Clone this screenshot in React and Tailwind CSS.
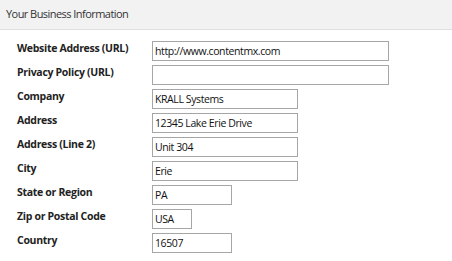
import React from "react";

const fields = [
  { label: "Website Address (URL)", value: "http://www.contentmx.com", width: "w-[237px]" },
  { label: "Privacy Policy (URL)", value: "", width: "w-[237px]" },
  { label: "Company", value: "KRALL Systems", width: "w-[146px]" },
  { label: "Address", value: "12345 Lake Erie Drive", width: "w-[146px]" },
  { label: "Address (Line 2)", value: "Unit 304", width: "w-[146px]" },
  { label: "City", value: "Erie", width: "w-[146px]" },
  { label: "State or Region", value: "PA", width: "w-[80px]" },
  { label: "Zip or Postal Code", value: "USA", width: "w-[40px]" },
  { label: "Country", value: "16507", width: "w-[80px]" },
];

const App = () => {
  return (
    <div className="w-[452px] h-[261px] bg-white font-['Open_Sans',sans-serif] text-[#222]">
      <div className="h-[30px] bg-[#f2f2f2] border-b border-[#e0e0e0] flex items-center pl-[6px] text-[11px] tracking-[-0.55px] text-[#333]">
        Your Business Information
      </div>

      {/* form rows */}
      <div className="pt-[11px] pl-[17px] flex flex-col gap-[4px]">
        {fields.map((f) => (
          <div key={f.label} className="flex items-start h-[20px]">
            <label className="w-[135px] text-[10.5px] font-bold tracking-[-0.3px] leading-[14px] text-[#222]">
              {f.label}
            </label>
            <input
              readOnly
              value={f.value}
              className={`${f.width} h-[20px] border border-[#a6a6a6] px-[2px] text-[10.5px] tracking-[-0.4px] text-[#111] outline-none`}
            />
          </div>
        ))}
      </div>
    </div>
  );
};

export default App;
